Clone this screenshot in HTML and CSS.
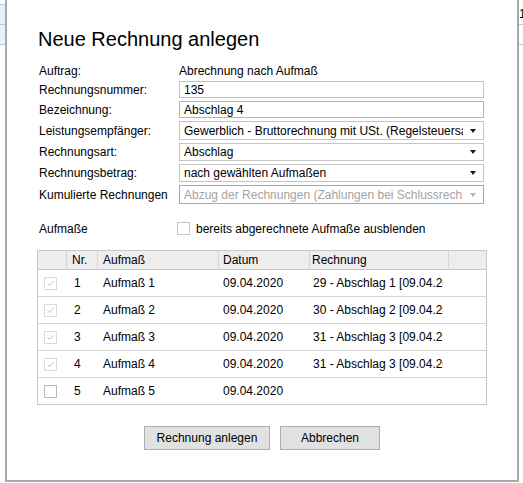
FILE: index.html
```html
<!DOCTYPE html>
<html lang="de">
<head>
<meta charset="utf-8">
<title>Neue Rechnung anlegen</title>
<link rel="stylesheet" href="styles.css">
</head>
<body>
<div class="page">
  <div class="strip-left">
    <div class="gap"></div>
    <div class="cell"></div>
    <div class="cell last"></div>
  </div>

  <div class="dialog">
    <h1 class="title">Neue Rechnung anlegen</h1>

    <div class="form">
      <div class="label">Auftrag:</div>
      <div class="value">Abrechnung nach Aufmaß</div>

      <div class="label">Rechnungsnummer:</div>
      <input class="field" type="text" value="135">

      <div class="label">Bezeichnung:</div>
      <input class="field focus" type="text" value="Abschlag 4">

      <div class="label">Leistungsempfänger:</div>
      <div class="select"><span class="val">Gewerblich - Bruttorechnung mit USt. (Regelsteuersatz)</span><span class="arrow"></span></div>

      <div class="label">Rechnungsart:</div>
      <div class="select"><span class="val">Abschlag</span><span class="arrow"></span></div>

      <div class="label">Rechnungsbetrag:</div>
      <div class="select"><span class="val">nach gewählten Aufmaßen</span><span class="arrow"></span></div>

      <div class="label">Kumulierte Rechnungen</div>
      <div class="select disabled"><span class="val">Abzug der Rechnungen (Zahlungen bei Schlussrechnungen)</span><span class="arrow"></span></div>
    </div>

    <div class="aufm">
      <div class="aufm-label">Aufmaße</div>
      <div class="toggle"><span class="cb"></span><span>bereits abgerechnete Aufmaße ausblenden</span></div>
    </div>

    <div class="table">
      <div class="thead">
        <div class="th c1"></div>
        <div class="th c2">Nr.</div>
        <div class="th c3">Aufmaß</div>
        <div class="th c4">Datum</div>
        <div class="th c5">Rechnung</div>
        <div class="th c6"></div>
      </div>
      <div class="trow">
        <div class="td c1"><span class="cb done"><svg viewBox="0 0 11 11" width="11" height="11"><path d="M2.5 5.5 L4.5 7.5 L8.5 3.2" fill="none" stroke="#bdbdbd" stroke-width="1"/></svg></span></div>
        <div class="td c2">1</div>
        <div class="td c3">Aufmaß 1</div>
        <div class="td c4">09.04.2020</div>
        <div class="td c5"><span class="clip">29 - Abschlag 1 [09.04.2020]</span></div>
        <div class="td c6"></div>
      </div>
      <div class="trow">
        <div class="td c1"><span class="cb done"><svg viewBox="0 0 11 11" width="11" height="11"><path d="M2.5 5.5 L4.5 7.5 L8.5 3.2" fill="none" stroke="#bdbdbd" stroke-width="1"/></svg></span></div>
        <div class="td c2">2</div>
        <div class="td c3">Aufmaß 2</div>
        <div class="td c4">09.04.2020</div>
        <div class="td c5"><span class="clip">30 - Abschlag 2 [09.04.2020]</span></div>
        <div class="td c6"></div>
      </div>
      <div class="trow">
        <div class="td c1"><span class="cb done"><svg viewBox="0 0 11 11" width="11" height="11"><path d="M2.5 5.5 L4.5 7.5 L8.5 3.2" fill="none" stroke="#bdbdbd" stroke-width="1"/></svg></span></div>
        <div class="td c2">3</div>
        <div class="td c3">Aufmaß 3</div>
        <div class="td c4">09.04.2020</div>
        <div class="td c5"><span class="clip">31 - Abschlag 3 [09.04.2020]</span></div>
        <div class="td c6"></div>
      </div>
      <div class="trow">
        <div class="td c1"><span class="cb done"><svg viewBox="0 0 11 11" width="11" height="11"><path d="M2.5 5.5 L4.5 7.5 L8.5 3.2" fill="none" stroke="#bdbdbd" stroke-width="1"/></svg></span></div>
        <div class="td c2">4</div>
        <div class="td c3">Aufmaß 4</div>
        <div class="td c4">09.04.2020</div>
        <div class="td c5"><span class="clip">31 - Abschlag 3 [09.04.2020]</span></div>
        <div class="td c6"></div>
      </div>
      <div class="trow">
        <div class="td c1"><span class="cb open"></span></div>
        <div class="td c2">5</div>
        <div class="td c3">Aufmaß 5</div>
        <div class="td c4">09.04.2020</div>
        <div class="td c5"></div>
        <div class="td c6"></div>
      </div>
    </div>

    <div class="actions">
      <button class="btn btn-primary" type="button">Rechnung anlegen</button>
      <button class="btn btn-secondary" type="button">Abbrechen</button>
    </div>
  </div>

  <div class="strip-right">
    <div class="rcell first">1</div>
    <div class="rcell"></div>
  </div>
</div>
</body>
</html>
```

FILE: styles.css
```css
html, body {
  margin: 0;
  padding: 0;
  background: #ffffff;
}

body {
  font-family: "Liberation Sans", Arial, sans-serif;
  font-size: 12px;
  color: #000000;
}

.page {
  display: flex;
  height: 483px;
  overflow: hidden;
}

/* background sheet (left) */
.strip-left {
  width: 5px;
  flex: none;
}

.strip-left .gap {
  height: 4px;
}

.strip-left .cell {
  height: 19px;
  border-top: 1px solid #c6c6c6;
  background: #e5f3fb;
}

.strip-left .cell.last {
  border-bottom: 1px solid #c6c6c6;
}

/* background sheet (right) */
.strip-right {
  flex: 1;
  overflow: hidden;
  white-space: nowrap;
}

.rcell {
  height: 19px;
  line-height: 19px;
  border-bottom: 1px solid #c6c6c6;
}

.rcell.first {
  padding-top: 5px;
}

/* dialog */
.dialog {
  flex: none;
  width: 514px;
  height: 482px;
  box-sizing: border-box;
  border: 2px solid #a9a9a9;
  border-top: 0;
  padding: 28px 30px 0;
  background: #ffffff;
}

.title {
  margin: 0 0 13px;
  padding-left: 1px;
  font-size: 20px;
  font-weight: normal;
  line-height: 23px;
  color: #000000;
}

.form {
  display: grid;
  grid-template-columns: 142px 305px;
  grid-template-rows: 14px 17px 17px 19px 18px 18px 19px;
  row-gap: 3px;
}

.label {
  padding-left: 2px;
  display: flex;
  align-items: center;
  white-space: nowrap;
}

.value {
  display: flex;
  align-items: center;
  white-space: nowrap;
}

.field {
  width: 305px;
  height: 17px;
  box-sizing: border-box;
  margin: 0;
  padding: 0 4px;
  border: 1px solid #c4c4c4;
  border-radius: 0;
  background: #ffffff;
  font-family: "Liberation Sans", Arial, sans-serif;
  font-size: 12px;
  color: #000000;
  outline: none;
}

.field.focus {
  border-color: #f0b31d;
}

.select {
  display: flex;
  align-items: center;
  box-sizing: border-box;
  border: 1px solid #c4c4c4;
  background: #ffffff;
}

.select .val {
  flex: 1;
  min-width: 0;
  margin-left: 4px;
  margin-right: 7px;
  overflow: hidden;
  white-space: nowrap;
}

.select .arrow {
  flex: none;
  width: 0;
  height: 0;
  margin-right: 7px;
  border-left: 3px solid transparent;
  border-right: 3px solid transparent;
  border-top: 4px solid #1a1a1a;
}

.select.disabled {
  border-color: #a8a8a8;
  color: #a3a3a3;
}

.select.disabled .arrow {
  border-top-color: #b4b4b4;
}

/* Aufmaße row */
.aufm {
  display: flex;
  align-items: center;
  height: 15px;
  margin-top: 17px;
}

.aufm-label {
  width: 140px;
  box-sizing: border-box;
  padding-left: 2px;
}

.toggle {
  display: flex;
  align-items: center;
  gap: 6px;
  white-space: nowrap;
}

.cb {
  width: 13px;
  height: 13px;
  box-sizing: border-box;
  border: 1px solid #c6c6c6;
  background: #ffffff;
  display: flex;
  align-items: center;
  justify-content: center;
  flex: none;
}

.cb svg {
  display: block;
}

.cb.done {
  border-color: #dadada;
}

.cb.open {
  border-color: #b8b8b8;
}

/* table */
.table {
  margin-top: 14px;
  border: 1px solid #c8c8c8;
}

.thead,
.trow {
  display: grid;
  grid-template-columns: 29px 31px 121px 91px 139px 37px;
}

.th {
  height: 18px;
  background: #ededed;
  border-right: 1px solid #d5d5d5;
  border-bottom: 1px solid #c8c8c8;
  display: flex;
  align-items: center;
  white-space: nowrap;
}

.th.c6 {
  border-right: 0;
}

.td {
  height: 26px;
  border-bottom: 1px solid #d3d3d3;
  display: flex;
  align-items: center;
  white-space: nowrap;
  overflow: hidden;
}

.trow:last-child .td {
  border-bottom: 0;
}

.c1 { padding-left: 6px; }
.th.c2 { padding-left: 5px; }
.td.c2 { padding-left: 7px; }
.c3 { padding-left: 5px; }
.c4 { padding-left: 4px; }
.th.c5 { padding-left: 2px; }
.td.c5 { padding-left: 3px; }

.clip {
  display: block;
  width: 130px;
  overflow: hidden;
  white-space: nowrap;
}

/* buttons */
.actions {
  display: flex;
  justify-content: center;
  gap: 10px;
  margin-top: 21px;
}

.btn {
  height: 24px;
  box-sizing: border-box;
  margin: 0;
  padding: 0;
  border: 1px solid #adadad;
  border-radius: 0;
  background: #e1e1e1;
  font-family: "Liberation Sans", Arial, sans-serif;
  font-size: 12px;
  color: #000000;
}

.btn-primary {
  width: 126px;
}

.btn-secondary {
  width: 100px;
}
```
